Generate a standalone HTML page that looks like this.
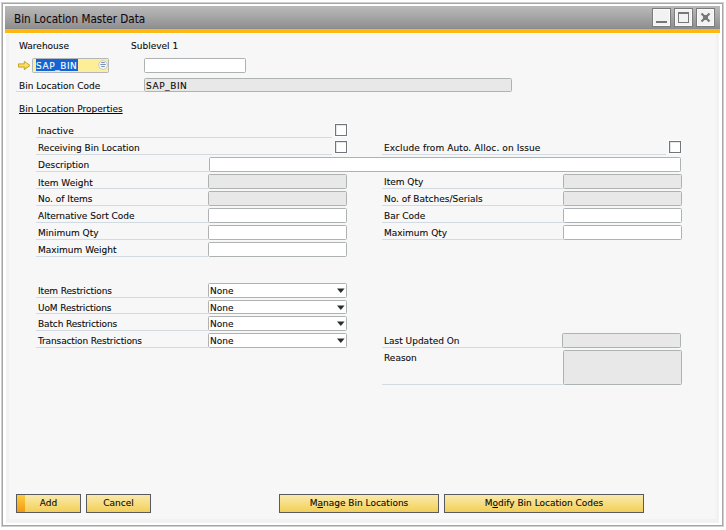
<!DOCTYPE html>
<html><head><meta charset="utf-8">
<style>
*{box-sizing:border-box;margin:0;padding:0}
html,body{width:726px;height:530px;overflow:hidden;background:#fff}
body{position:relative;font-family:"DejaVu Sans","Liberation Sans",sans-serif;font-size:9px;color:#0a0a0a;-webkit-text-stroke:0.1px}
.abs,.abs>*{position:absolute}
.frame{left:1px;top:2px;width:723px;height:525px;border:1px solid #cfcfcf;background:#a6a6a6}
.frame2{left:3px;top:4px;width:719px;height:521px;background:#fff}
.content{left:6px;top:33px;width:713px;height:490px;background:#f7f7f7;border-top:1px solid #fafbfd}
.shadeL{left:6px;top:34px;width:3px;height:489px;background:#f2f2f2}
.shadeR{left:716px;top:34px;width:3px;height:489px;background:#f2f2f2}
.shadeB{left:6px;top:519px;width:713px;height:4px;background:#f2f2f2}
.title{left:5px;top:6px;width:715px;height:23px;background:linear-gradient(180deg,#bababa 0%,#a8a8a8 45%,#8f8f8f 100%);border-bottom:1px solid #898b92}
.orange{left:5px;top:29px;width:715px;height:4px;background:#fdb813}
.ttext{left:14px;top:12px;font-family:"DejaVu Sans Condensed","DejaVu Sans",sans-serif;font-size:11.6px;color:#120a12;white-space:nowrap;line-height:14px}
.wb{top:8px;width:19px;height:19px;border:1px solid #7b7b7b;background:#f2f2f2;box-shadow:inset 0 0 0 1px #fafafa}
.lbl{white-space:nowrap;line-height:12px;height:12px}
.ln{height:1px;background:#d3dbe2}
.inp{height:15px;border:1px solid #aeb2b3;border-radius:1.5px;background:#fff}
.dis{background:#e8e8e8}
.cb{width:12px;height:12px;border:1px solid #70767c;background:#fff;box-shadow:0 0 0 1px #fdfdfd,inset 1px 1px 0 0 #e4e6e8}
.sel{height:15px;border:1px solid #aeb2b3;border-radius:1.5px;background:#fff}
.sel span{position:absolute;left:1px;top:1px;line-height:12px}
.sel svg{position:absolute;left:128px;top:4px}
.btn{top:494px;height:19px;border:1px solid #5a5a5e;background:linear-gradient(180deg,#f9e9ae 0%,#f6dc7c 55%,#f2cf5a 100%);text-align:center;line-height:16px;white-space:nowrap}
u{text-decoration:underline;text-decoration-skip-ink:none}
.lbl{text-decoration-skip-ink:none}
</style></head><body>
<div class="abs">
<div class="frame"></div><div class="frame2"></div>
<div class="content"></div>
<div class="shadeL"></div><div class="shadeR"></div><div class="shadeB"></div>
<div class="title"></div>
<div class="orange"></div>
<div class="ttext">Bin Location Master Data</div>

<div class="wb" style="left:652px"><svg width="17" height="17" style="position:absolute;left:0;top:0"><rect x="3" y="12" width="11" height="2" fill="#777"/></svg></div>
<div class="wb" style="left:674px"><svg width="17" height="17" style="position:absolute;left:0;top:0"><rect x="3.5" y="3.5" width="10" height="10" fill="none" stroke="#777"/><rect x="3" y="3" width="11" height="2" fill="#777"/></svg></div>
<div class="wb" style="left:696px"><svg width="17" height="17" style="position:absolute;left:0;top:0"><path d="M4.5 4.5 L12.5 12.5 M12.5 4.5 L4.5 12.5" stroke="#777" stroke-width="2.2"/><rect x="6" y="6" width="5" height="5" fill="#777"/></svg></div>

<div class="lbl" style="left:19px;top:40px">Warehouse</div>
<div class="lbl" style="left:131px;top:40px">Sublevel 1</div>

<svg style="left:18px;top:61px" width="13" height="9" viewBox="0 0 13 9" overflow="visible"><defs><linearGradient id="ag" x1="0" y1="0" x2="0" y2="1"><stop offset="0" stop-color="#fff19a"/><stop offset="1" stop-color="#f6c92a"/></linearGradient></defs><path d="M0.5 2.9 H6.3 V0.3 L12 4.5 L6.3 8.7 V6.1 H0.5 Z" fill="url(#ag)" stroke="#c9a127" stroke-width="1"/></svg>
<div class="inp" style="left:32px;top:58px;width:77px;background:#fdee98;border-color:#b3b6bb"></div>
<div style="left:36px;top:59px;width:42px;height:12px;background:#1464d2"></div>
<div class="lbl" style="left:36px;top:60px;color:#fff;letter-spacing:0.55px">SAP_BIN</div>
<svg style="left:98px;top:60px" width="10" height="10" viewBox="0 0 10 10"><circle cx="5" cy="5" r="4.4" fill="#f1f4f8" stroke="#c2c6cc" stroke-width="0.9"/><path d="M3.2 2.5h3.6M2.3 4.5h5.4M3.2 6.5h3.6" stroke="#7d95b5" stroke-width="1"/></svg>
<div class="inp" style="left:144px;top:58px;width:102px"></div>

<div class="lbl" style="left:19px;top:80px">Bin Location Code</div>
<div class="ln" style="left:16px;top:91px;width:128px"></div>
<div class="inp dis" style="left:144px;top:78px;width:368px;height:14px"></div>
<div class="lbl" style="left:146px;top:80px;letter-spacing:0.55px">SAP_BIN</div>

<div class="lbl" style="left:19px;top:103px;text-decoration:underline">Bin Location Properties</div>

<!-- left rows -->
<div class="lbl" style="left:38px;top:125px">Inactive</div>
<div class="ln" style="left:36px;top:137px;width:296px"></div>
<div class="cb" style="left:335px;top:124px"></div>

<div class="lbl" style="left:38px;top:142px">Receiving Bin Location</div>
<div class="ln" style="left:36px;top:154px;width:296px"></div>
<div class="cb" style="left:335px;top:141px"></div>

<div class="lbl" style="left:38px;top:159px">Description</div>
<div class="ln" style="left:36px;top:171px;width:173px"></div>
<div class="inp" style="left:209px;top:157px;width:472px"></div>

<div class="lbl" style="left:38px;top:177px">Item Weight</div>
<div class="ln" style="left:36px;top:188px;width:172px"></div>
<div class="inp dis" style="left:208px;top:174px;width:139px"></div>

<div class="lbl" style="left:38px;top:193px">No. of Items</div>
<div class="ln" style="left:36px;top:205px;width:172px"></div>
<div class="inp dis" style="left:208px;top:191px;width:139px"></div>

<div class="lbl" style="left:38px;top:210px">Alternative Sort Code</div>
<div class="ln" style="left:36px;top:222px;width:172px"></div>
<div class="inp" style="left:208px;top:208px;width:139px"></div>

<div class="lbl" style="left:38px;top:227px">Minimum Qty</div>
<div class="ln" style="left:36px;top:239px;width:172px"></div>
<div class="inp" style="left:208px;top:225px;width:139px"></div>

<div class="lbl" style="left:38px;top:244px">Maximum Weight</div>
<div class="ln" style="left:36px;top:256px;width:172px"></div>
<div class="inp" style="left:208px;top:242px;width:139px"></div>

<!-- right rows -->
<div class="lbl" style="left:384px;top:142px;letter-spacing:0.1px">Exclude from Auto. Alloc. on Issue</div>
<div class="ln" style="left:382px;top:154px;width:284px"></div>
<div class="cb" style="left:669px;top:141px"></div>

<div class="lbl" style="left:384px;top:176px">Item Qty</div>
<div class="ln" style="left:382px;top:188px;width:181px"></div>
<div class="inp dis" style="left:563px;top:174px;width:119px"></div>

<div class="lbl" style="left:384px;top:193px">No. of Batches/Serials</div>
<div class="ln" style="left:382px;top:205px;width:181px"></div>
<div class="inp dis" style="left:563px;top:191px;width:119px"></div>

<div class="lbl" style="left:384px;top:210px">Bar Code</div>
<div class="ln" style="left:382px;top:222px;width:181px"></div>
<div class="inp" style="left:563px;top:208px;width:119px"></div>

<div class="lbl" style="left:384px;top:227px">Maximum Qty</div>
<div class="ln" style="left:382px;top:239px;width:181px"></div>
<div class="inp" style="left:563px;top:225px;width:119px"></div>

<!-- restrictions -->
<div class="lbl" style="left:38px;top:285px;letter-spacing:-0.13px">Item Restrictions</div>
<div class="ln" style="left:36px;top:297px;width:172px"></div>
<div class="sel" style="left:208px;top:283px;width:139px"><span>None</span><svg width="8" height="6" viewBox="0 0 8 6"><polygon points="0,0.6 7.6,0.6 3.8,5" fill="#2c2c2c"/></svg></div>

<div class="lbl" style="left:38px;top:302px;letter-spacing:-0.13px">UoM Restrictions</div>
<div class="ln" style="left:36px;top:313px;width:172px"></div>
<div class="sel" style="left:208px;top:300px;width:139px;height:14px"><span>None</span><svg width="8" height="6" viewBox="0 0 8 6"><polygon points="0,0.6 7.6,0.6 3.8,5" fill="#2c2c2c"/></svg></div>

<div class="lbl" style="left:38px;top:318px;letter-spacing:-0.13px">Batch Restrictions</div>
<div class="ln" style="left:36px;top:330px;width:172px"></div>
<div class="sel" style="left:208px;top:316px;width:139px"><span>None</span><svg width="8" height="6" viewBox="0 0 8 6"><polygon points="0,0.6 7.6,0.6 3.8,5" fill="#2c2c2c"/></svg></div>

<div class="lbl" style="left:38px;top:335px;letter-spacing:-0.13px">Transaction Restrictions</div>
<div class="ln" style="left:36px;top:347px;width:172px"></div>
<div class="sel" style="left:208px;top:333px;width:139px"><span>None</span><svg width="8" height="6" viewBox="0 0 8 6"><polygon points="0,0.6 7.6,0.6 3.8,5" fill="#2c2c2c"/></svg></div>

<div class="lbl" style="left:384px;top:335px">Last Updated On</div>
<div class="ln" style="left:382px;top:347px;width:181px"></div>
<div class="inp dis" style="left:562px;top:333px;width:119px"></div>

<div class="lbl" style="left:384px;top:352px">Reason</div>
<div class="ln" style="left:382px;top:384px;width:181px"></div>
<div class="inp dis" style="left:563px;top:350px;width:119px;height:35px"></div>

<!-- buttons -->
<div class="btn" style="left:16px;width:65px"><b style="position:absolute;left:0;top:0;width:8px;height:17px;background:linear-gradient(180deg,#fbcf3e,#f39a12)"></b>Add</div>
<div class="btn" style="left:86px;width:65px">Cancel</div>
<div class="btn" style="left:279px;width:160px">M<u>a</u>nage Bin Locations</div>
<div class="btn" style="left:444px;width:200px">M<u>o</u>dify Bin Location Codes</div>
</div>
</body></html>
